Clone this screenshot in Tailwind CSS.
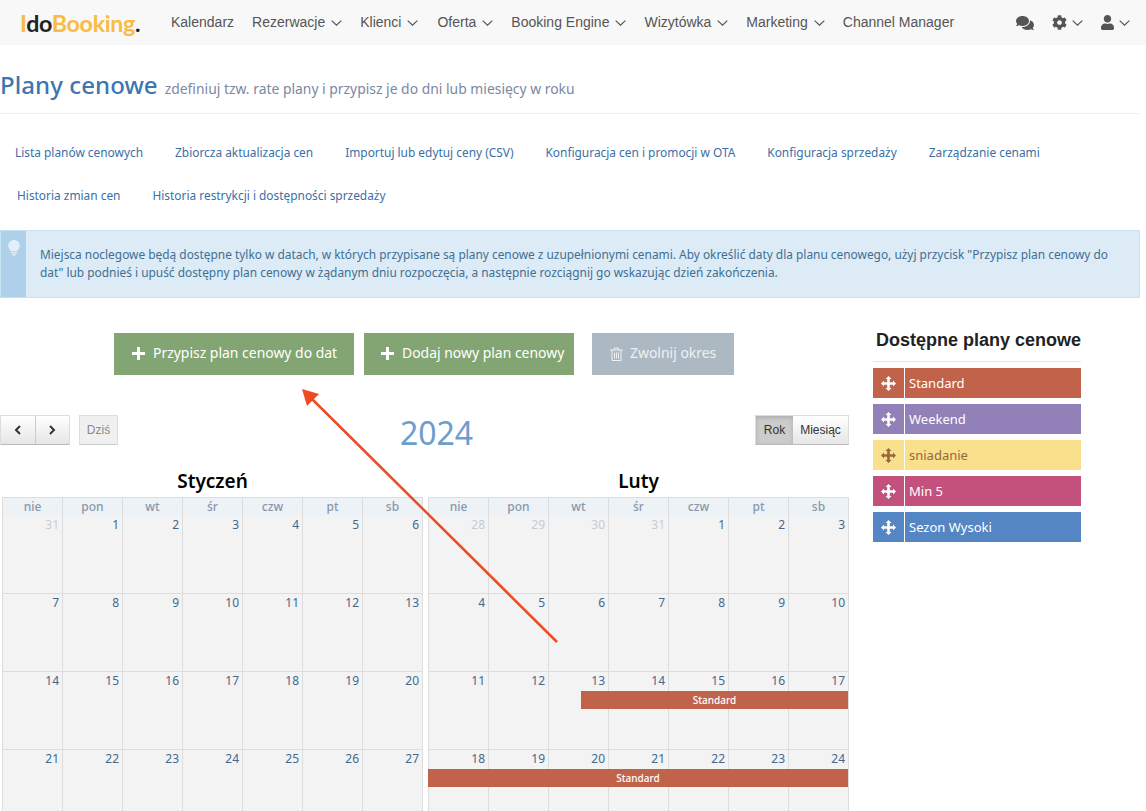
<!DOCTYPE html>
<html lang="pl">
  <head>
    <meta charset="UTF-8" />
    <title>Plany cenowe</title>
    <script src="https://cdn.jsdelivr.net/npm/@tailwindcss/browser@4"></script>
  </head>
  <body class="bg-white font-['Noto_Sans',sans-serif]">
    <div class="relative h-[811px] w-[1146px] overflow-hidden">
      <!-- navbar -->
      <header class="flex h-[45px] items-center bg-[#f8f8f8] pl-5 font-['Liberation_Sans',sans-serif] text-[14px] text-[#555]">
        <a class="mt-[2px] w-[151px] shrink-0 font-['Lato',sans-serif] text-[23.2px] font-bold tracking-[-0.3px] text-[#fabb43]">I<span class="text-[#222]">do</span>Booking<span class="text-[#222]">.</span></a>
        <nav class="flex items-center gap-[18px]">
          <a>Kalendarz</a>
          <a class="flex items-center gap-[6px]">Rezerwacje <svg class="h-[6px] w-[11px]" viewBox="0 0 11 6" fill="none" stroke="#555" stroke-width="1.2"><path d="M.7.6 5.5 5.2 10.3.6" /></svg></a>
          <a class="flex items-center gap-[6px]">Klienci <svg class="h-[6px] w-[11px]" viewBox="0 0 11 6" fill="none" stroke="#555" stroke-width="1.2"><path d="M.7.6 5.5 5.2 10.3.6" /></svg></a>
          <a class="ml-px flex items-center gap-[6px]">Oferta <svg class="h-[6px] w-[11px]" viewBox="0 0 11 6" fill="none" stroke="#555" stroke-width="1.2"><path d="M.7.6 5.5 5.2 10.3.6" /></svg></a>
          <a class="flex items-center gap-[6px]">Booking Engine <svg class="h-[6px] w-[11px]" viewBox="0 0 11 6" fill="none" stroke="#555" stroke-width="1.2"><path d="M.7.6 5.5 5.2 10.3.6" /></svg></a>
          <a class="flex items-center gap-[6px]">Wizytówka <svg class="h-[6px] w-[11px]" viewBox="0 0 11 6" fill="none" stroke="#555" stroke-width="1.2"><path d="M.7.6 5.5 5.2 10.3.6" /></svg></a>
          <a class="flex items-center gap-[6px]">Marketing <svg class="h-[6px] w-[11px]" viewBox="0 0 11 6" fill="none" stroke="#555" stroke-width="1.2"><path d="M.7.6 5.5 5.2 10.3.6" /></svg></a>
          <a>Channel Manager</a>
        </nav>
        <div class="ml-[22px] flex items-center text-[#555]" id="navIcons">
          <svg class="ml-[40px] h-[16px] w-[18px]" viewBox="0 0 576 512" fill="#555"><path d="M416 192c0-88.4-93.1-160-208-160S0 103.6 0 192c0 34.3 14.1 65.9 38 92-13.4 30.2-35.5 54.2-35.8 54.5-2.2 2.3-2.8 5.7-1.5 8.7S4.8 352 8 352c36.6 0 66.9-12.3 88.7-25 32.2 15.7 70.3 25 111.3 25 114.9 0 208-71.6 208-160zm122 220c23.9-26 38-57.7 38-92 0-66.9-53.5-124.2-129.3-148.1.9 6.6 1.3 13.3 1.3 20.1 0 105.9-107.7 192-240 192-10.8 0-21.3-.8-31.7-1.9C207.8 439.6 281.8 480 368 480c41 0 79.1-9.2 111.3-25 21.8 12.7 52.1 25 88.7 25 3.2 0 6.1-1.9 7.3-4.8 1.3-2.9.7-6.3-1.5-8.7-.3-.3-22.4-24.2-35.8-54.5z" /></svg>
          <svg class="ml-[18px] h-[15px] w-[15px]" viewBox="0 0 512 512" fill="#555"><path d="M487.4 315.7l-42.6-24.6c4.3-23.2 4.3-47 0-70.2l42.6-24.6c4.9-2.8 7.1-8.6 5.5-14-11.1-35.6-30-67.8-54.7-94.6-3.8-4.1-10-5.1-14.8-2.3L380.8 110c-17.9-15.4-38.5-27.3-60.8-35.1V25.8c0-5.6-3.9-10.5-9.4-11.7-36.7-8.2-74.3-7.8-109.2 0-5.5 1.2-9.4 6.1-9.4 11.7V75c-22.2 7.9-42.8 19.8-60.8 35.1L88.7 85.5c-4.9-2.8-11-1.9-14.8 2.3-24.7 26.7-43.6 58.9-54.7 94.6-1.7 5.4.6 11.2 5.5 14L67.3 221c-4.3 23.2-4.3 47 0 70.2l-42.6 24.6c-4.9 2.8-7.1 8.6-5.5 14 11.1 35.6 30 67.8 54.7 94.6 3.8 4.1 10 5.1 14.8 2.3l42.6-24.6c17.9 15.4 38.5 27.3 60.8 35.1v49.2c0 5.6 3.9 10.5 9.4 11.7 36.7 8.2 74.3 7.8 109.2 0 5.5-1.2 9.4-6.1 9.4-11.7v-49.2c22.2-7.9 42.8-19.8 60.8-35.1l42.6 24.6c4.9 2.8 11 1.9 14.8-2.3 24.7-26.7 43.6-58.9 54.7-94.6 1.5-5.5-.7-11.3-5.6-14.1zM256 336c-44.1 0-80-35.9-80-80s35.9-80 80-80 80 35.9 80 80-35.9 80-80 80z" /></svg>
          <svg class="ml-[5px] h-[6px] w-[11px]" viewBox="0 0 11 6" fill="none" stroke="#555" stroke-width="1.2"><path d="M.7.6 5.5 5.2 10.3.6" /></svg>
          <svg class="ml-[18px] h-[15px] w-[13px]" viewBox="0 0 448 512" fill="#555"><path d="M224 256c70.7 0 128-57.3 128-128S294.7 0 224 0 96 57.3 96 128s57.3 128 128 128zm89.6 32h-16.7c-22.2 10.2-46.9 16-72.9 16s-50.6-5.8-72.9-16h-16.7C60.2 288 0 348.2 0 422.4V464c0 26.5 21.5 48 48 48h352c26.5 0 48-21.5 48-48v-41.6c0-74.2-60.2-134.4-134.4-134.4z" /></svg>
          <svg class="ml-[5px] h-[6px] w-[11px]" viewBox="0 0 11 6" fill="none" stroke="#555" stroke-width="1.2"><path d="M.7.6 5.5 5.2 10.3.6" /></svg>
        </div>
      </header>

      <main class="w-[1140px]">
        <!-- title -->
        <div class="flex h-[69px] items-baseline gap-[7px] border-b border-[#eeeeee] pt-[23px]">
          <h1 class="text-[24px] leading-[34px] font-medium tracking-[0.08px] text-[#3d76b2]">Plany cenowe</h1>
          <span class="text-[13.9px] text-[#7b88a1]">zdefiniuj tzw. rate plany i przypisz je do dni lub miesięcy w roku</span>
        </div>

        <!-- tabs -->
        <div class="mt-[18px] flex h-[42px] items-center gap-[32px] pl-[15px] text-[11.9px] text-[#3a6fa5]">
          <a>Lista planów cenowych</a>
          <a>Zbiorcza aktualizacja cen</a>
          <a>Importuj lub edytuj ceny (CSV)</a>
          <a>Konfiguracja cen i promocji w OTA</a>
          <a>Konfiguracja sprzedaży</a>
          <a>Zarządzanie cenami</a>
        </div>
        <div class="flex h-[44px] items-center gap-[32px] pl-[17px] text-[11.9px] text-[#3a6fa5]">
          <a>Historia zmian cen</a>
          <a>Historia restrykcji i dostępności sprzedaży</a>
        </div>

        <!-- info box -->
        <div class="mt-[12px] flex h-[68px] border border-[#c5e3f0] bg-[#dcebf6]">
          <div class="flex w-[25px] shrink-0 justify-center bg-[#aed0ea] pt-[9px]">
            <svg class="h-[16px] w-[12px]" viewBox="0 0 13 18" fill="#e3eff8"><path d="M6.5 0C2.9 0 0 2.7 0 6.1c0 2.7 2 3.9 2.6 6.6h7.8C11 10 13 8.8 13 6.1 13 2.7 10.100 0 6.500 0zM3 13.700h7v1.500H3zM4.200 16h4.600l-1 1.600H5.200z" /></svg>
          </div>
          <p class="py-[14px] pr-[12px] pl-[14px] text-[11.9px] leading-[18px] text-[#3f6f92]">Miejsca noclegowe będą dostępne tylko w datach, w których przypisane są plany cenowe z uzupełnionymi cenami. Aby określić daty dla planu cenowego, użyj przycisk "Przypisz plan cenowy do dat" lub podnieś i upuść dostępny plan cenowy w żądanym dniu rozpoczęcia, a następnie rozciągnij go wskazując dzień zakończenia.</p>
        </div>

        <div class="mt-[35px] flex items-start">
          <!-- left column -->
          <div class="w-[849px] shrink-0">
            <div class="flex pl-[114px] text-[13.95px] text-white">
              <button class="flex h-[42px] w-[240px] items-center gap-[8px] bg-[#83a573] pb-[1px] pl-[18px]">
                <svg class="h-[13px] w-[13px]" viewBox="0 0 13 13" fill="#fff"><path d="M5 0h3v5h5v3H8v5H5V8H0V5h5z" /></svg>
                Przypisz plan cenowy do dat
              </button>
              <button class="ml-[10px] flex h-[42px] w-[210px] items-center gap-[8px] bg-[#83a573] pb-[1px] pl-[17px]">
                <svg class="h-[13px] w-[13px]" viewBox="0 0 13 13" fill="#fff"><path d="M5 0h3v5h5v3H8v5H5V8H0V5h5z" /></svg>
                Dodaj nowy plan cenowy
              </button>
              <button class="ml-[18px] flex h-[42px] w-[142px] items-center gap-[7px] bg-[#acb9c3] pb-[1px] pl-[18px] text-[#eef1f3]">
                <svg class="h-[14px] w-[13px]" viewBox="0 0 13 14" fill="none" stroke="#eef1f3" stroke-width="1"><path d="M0 3h13M4.500 3V1h4v2M2 3v10.500h9V3M4.500 5.500v6M6.500 5.500v6M8.500 5.500v6" /></svg>
                Zwolnij okres
              </button>
            </div>

            <!-- calendar toolbar -->
            <div class="relative mt-[40px] flex h-[30px] items-center font-['Liberation_Sans',sans-serif] text-[12px]">
              <div class="flex h-[30px] w-[70px] rounded-[1px] border border-[#ddd] border-b-[#bbb] bg-gradient-to-b from-white to-[#e6e6e6]">
                <button class="flex flex-1 items-center justify-center border-r border-[#ccc]"><svg class="h-[10px] w-[7px]" viewBox="0 0 7 10" fill="none" stroke="#333" stroke-width="2"><path d="M6 1 2 5l4 4" /></svg></button>
                <button class="flex flex-1 items-center justify-center"><svg class="h-[10px] w-[7px]" viewBox="0 0 7 10" fill="none" stroke="#333" stroke-width="2"><path d="m1 1 4 4-4 4" /></svg></button>
              </div>
              <button class="ml-[9px] h-[30px] w-[39px] border border-[#ddd] border-b-[#ccc] bg-[#f0f0f0] text-[#888]">Dziś</button>
              <h2 class="flex-1 pt-[6px] text-center font-['Noto_Sans',sans-serif] text-[32px] leading-[30px] text-[#6b9dcd]">2024</h2>
              <div class="flex h-[30px] w-[94px] border border-[#ddd] border-b-[#bbb]">
                <button class="w-[37px] bg-[#cccccc] text-[#333] shadow-[inset_0_2px_4px_rgba(0,0,0,0.15)]">Rok</button>
                <button class="flex-1 bg-gradient-to-b from-white to-[#e6e6e6] text-[#333]">Miesiąc</button>
              </div>
            </div>

            <!-- months -->
            <div class="mt-[18px] flex gap-[5px] pl-[2px]" id="months"></div>
          </div>

          <!-- right column -->
          <aside class="ml-[24px] w-[208px]">
            <h3 class="border-b border-[#e3e8ec] pb-[13px] text-right font-['Liberation_Sans',sans-serif] text-[18px] leading-[15px] font-bold whitespace-nowrap text-[#222]">Dostępne plany cenowe</h3>
            <div class="mt-[6px] flex flex-col gap-[6px] text-[13px]" id="plans"></div>
          </aside>
        </div>
      </main>

      <!-- annotation arrow -->
      <svg class="pointer-events-none absolute top-0 left-0 h-[811px] w-[1146px]" viewBox="0 0 1146 811" fill="none">
        <path d="M557 642 311 398" stroke="#ee4b22" stroke-width="2.500" />
        <path d="M302 389 319 394 307 406z" fill="#ee4b22" />
      </svg>
    </div>

    <script>
      const moveIcon = (color) =>
        '<svg class="h-[15px] w-[15px]" viewBox="0 0 15 15" fill="' + color + '"><path d="M7.500 0 10.500 3H8.800V6.200H12V4.500L15 7.500 12 10.500V8.800H8.800V12H10.500L7.500 15 4.500 12H6.200V8.800H3V10.500L0 7.500 3 4.500V6.200H6.200V3H4.500z" /></svg>';

      const plans = [
        ["Standard", "bg-[#c1634b] text-white", "#fff"],
        ["Weekend", "bg-[#9181b8] text-white", "#fff"],
        ["sniadanie", "bg-[#f8e08c] text-[#96683a]", "#96683a"],
        ["Min 5", "bg-[#c3517b] text-white", "#fff"],
        ["Sezon Wysoki", "bg-[#5486c4] text-white", "#fff"],
      ];
      document.getElementById("plans").innerHTML = plans
        .map(
          ([name, cls, color]) =>
            '<div class="flex h-[30px] ' + cls + '"><span class="flex w-[32px] items-center justify-center border-r border-white">' + moveIcon(color) + '</span><span class="flex items-center pt-[2px] pl-[4px]">' + name + "</span></div>"
        )
        .join("");

      const days = ["nie", "pon", "wt", "śr", "czw", "pt", "sb"];

      function monthHtml(title, cells, bars) {
        let html = '<div class="w-[421px]"><h4 class="h-[34px] text-center text-[19px] leading-[36px] font-semibold text-black">' + title + "</h4>";
        html += '<div class="relative grid grid-cols-[repeat(7,60px)] border-t border-l border-[#dddddd]">';
        days.forEach((d) => {
          html += '<div class="h-[18px] border-r border-[#dddddd] bg-[#edf2f7] text-center text-[12px] leading-[17px] font-medium text-[#8a97a8]">' + d + "</div>";
        });
        cells.forEach(([n, old]) => {
          html += '<div class="h-[78px] border-r border-b border-[#dddddd] bg-[#f3f3f3] pt-[1px] pr-[3px] text-right text-[12px] leading-[16px] ' + (old ? "text-[#c3cdd6]" : "text-[#44688c]") + '">' + n + "</div>";
        });
        bars.forEach((b) => (html += b));
        return html + "</div></div>";
      }

      function range(from, to) {
        const out = [];
        for (let i = from; i <= to; i++) out.push([i, false]);
        return out;
      }

      const jan = [[31, true]].concat(range(1, 34).map(([n]) => [n > 31 ? n - 31 : n, n > 31]));
      const feb = [[28, true], [29, true], [30, true], [31, true]].concat(range(1, 31).map(([n]) => [n > 29 ? n - 29 : n, n > 29]));

      const barClass = "absolute flex h-[18px] items-center justify-center bg-[#c1634b] text-[10px] font-medium text-white";
      const febBars = [
        '<div class="' + barClass + ' top-[193px] left-[152px] w-[267px]">Standard</div>',
        '<div class="' + barClass + ' top-[271px] left-[-1px] w-[420px]">Standard</div>',
      ];

      document.getElementById("months").innerHTML = monthHtml("Styczeń", jan, []) + monthHtml("Luty", feb, febBars);
    </script>
  </body>
</html>
